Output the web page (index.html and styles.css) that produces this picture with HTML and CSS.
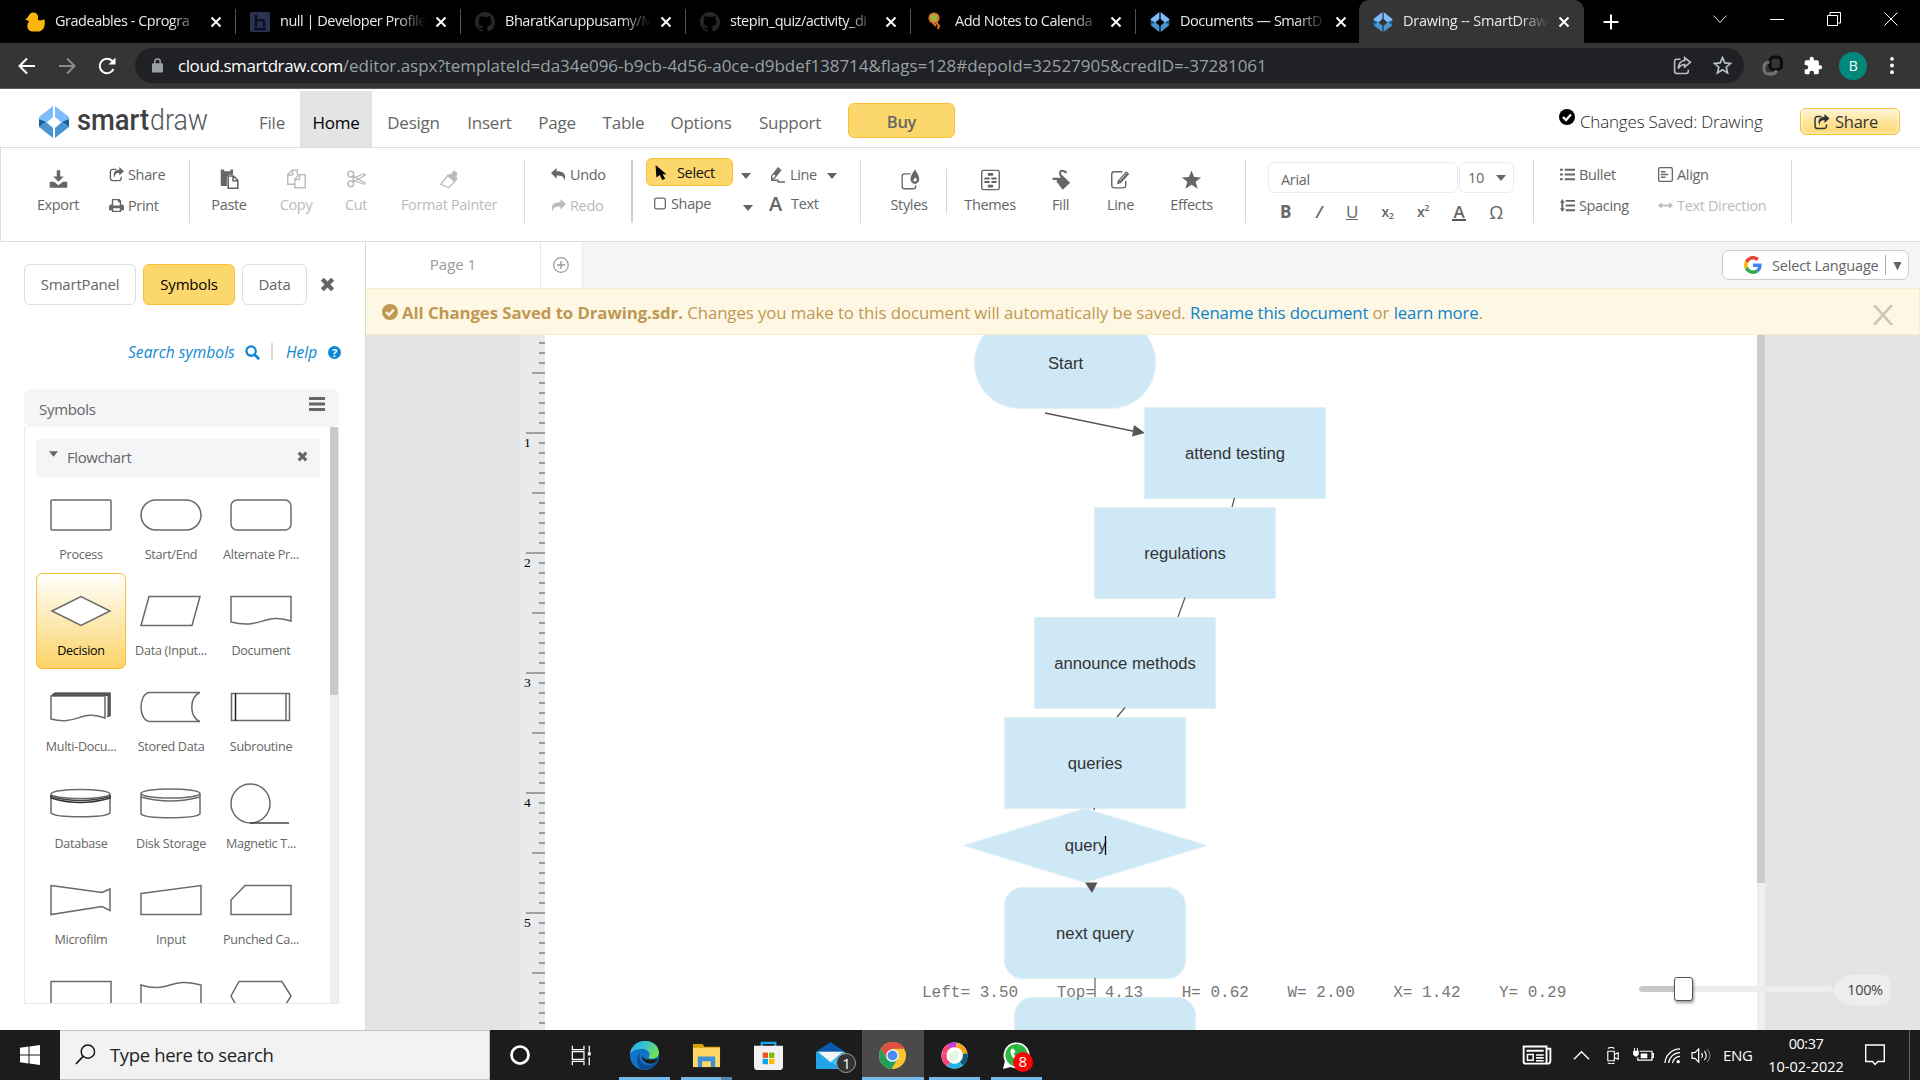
FILE: index.html
```
<!DOCTYPE html>
<html lang="en">
<head>
<meta charset="utf-8">
<title>Drawing -- SmartDraw</title>
<link rel="stylesheet" href="styles.css">
</head>
<body>
<svg class="defs" width="0" height="0">
  <symbol id="sd" viewBox="0 0 30 32">
    <path d="M14 0 0 11v2l7 4 7-6z" fill="#7cbcff"/><path d="M16 0 30 11v2l-7 4-7-6z" fill="#7cbcff"/>
    <path d="M0 13v8l7-5zM30 13v8l-7-5z" fill="#1d5f93"/>
    <path d="M14 32 0 21l7-5 7 6zM16 32l14-11-7-5-7 6z" fill="#4a95cf"/>
  </symbol>
  <symbol id="close" viewBox="0 0 12 12"><path d="M1.500 1.500l9 9M10.500 1.500l-9 9" stroke="currentColor" stroke-width="2" fill="none"/></symbol>
  <symbol id="times" viewBox="0 0 14 14"><path d="M2.200 2.200l9.600 9.600M11.800 2.200l-9.600 9.600" stroke="currentColor" stroke-width="4" fill="none"/></symbol>
  <symbol id="github" viewBox="0 0 16 16"><path fill="currentColor" d="M8 0C3.580 0 0 3.580 0 8c0 3.540 2.290 6.530 5.470 7.590.4.070.55-.17.55-.38 0-.19-.01-.82-.01-1.490-2.010.37-2.530-.49-2.690-.94-.09-.23-.48-.94-.82-1.130-.28-.15-.68-.52-.01-.53.63-.01 1.080.58 1.230.82.72 1.210 1.870.87 2.330.66.07-.52.28-.87.51-1.070-1.780-.2-3.640-.89-3.640-3.950 0-.87.31-1.590.82-2.150-.08-.2-.36-1.020.08-2.120 0 0 .67-.21 2.200.82.64-.18 1.320-.27 2-.27s1.360.09 2 .27c1.530-1.040 2.200-.82 2.200-.82.44 1.100.16 1.920.08 2.120.51.56.82 1.270.82 2.150 0 3.070-1.870 3.750-3.650 3.950.29.25.54.73.54 1.480 0 1.070-.01 1.930-.01 2.200 0 .21.15.46.55.38A8.010 8.010 0 0 0 16 8c0-4.420-3.580-8-8-8z"/></symbol>
  <symbol id="share" viewBox="0 0 16 16"><path d="M8 2.500H4a2.500 2.500 0 0 0-2.500 2.500v7A2.500 2.500 0 0 0 4 14.500h6.500A2.500 2.500 0 0 0 13 12v-1.500" fill="none" stroke="currentColor" stroke-width="1.500"/><path d="M11 0l5 4.500-5 4.500V6.300C7.500 6.200 6 7.500 6.300 11.500 3.500 7.500 5.500 2.800 11 2.800z" fill="currentColor"/></symbol>
  <symbol id="caret" viewBox="0 0 10 6"><path d="M0 0h10L5 6z" fill="currentColor"/></symbol>
  <symbol id="check" viewBox="0 0 16 16"><circle cx="8" cy="8" r="8" fill="currentColor"/><path d="M4 8l3 3 5-5.500" fill="none" stroke="var(--tick,#fff)" stroke-width="2.300"/></symbol>
</svg>

<div class="tabstrip">
  <div class="tab"><svg class="fav" viewBox="0 0 20 20"><path fill="#fbb50b" d="M2 6l3-4c2-2.500 7-2 8 2 .5 2-.5 3 0 4 3 1 5-1 6.500-.5.800 4 .5 11-5.500 12H7c-5-1-6-6-3-10L2 8H0z"/></svg><span>Gradeables - Cprogra</span><svg class="x"><use href="#close"/></svg></div>
  <div class="tab"><svg class="fav" viewBox="0 0 20 20"><rect width="20" height="20" rx="1.500" fill="#2b3355"/><path d="M6 3v12M6 9q8-3 8 2v4M4 17h12" stroke="#0b0f20" stroke-width="2.500" fill="none"/></svg><span>null | Developer Profile</span><svg class="x"><use href="#close"/></svg></div>
  <div class="tab"><svg class="fav gh"><use href="#github"/></svg><span>BharatKaruppusamy/M</span><svg class="x"><use href="#close"/></svg></div>
  <div class="tab"><svg class="fav gh"><use href="#github"/></svg><span>stepin_quiz/activity_di</span><svg class="x"><use href="#close"/></svg></div>
  <div class="tab"><svg class="fav" viewBox="0 0 20 20"><circle cx="9" cy="6" r="4.500" fill="#93b83e" stroke="#e0762b" stroke-width="2.200"/><path d="M11 10l3 4-1 3M8 11l3 3" stroke="#e0762b" stroke-width="2" fill="none"/></svg><span>Add Notes to Calenda</span><svg class="x"><use href="#close"/></svg></div>
  <div class="tab last"><svg class="fav"><use href="#sd"/></svg><span>Documents — SmartD</span><svg class="x"><use href="#close"/></svg></div>
  <div class="tab active"><svg class="fav"><use href="#sd"/></svg><span class="wide">Drawing -- SmartDraw</span><svg class="x"><use href="#close"/></svg></div>
  <svg class="newtab" viewBox="0 0 16 16"><path d="M8 .5v15M.5 8h15" stroke="#fff" stroke-width="2"/></svg>
  <div class="winctl">
    <svg viewBox="0 0 14 14"><path d="M.5 3.500L7 10.500l6.500-7" fill="none" stroke="#ddd"/></svg>
    <svg viewBox="0 0 14 14"><path d="M0 7.500h14" stroke="#fff"/></svg>
    <svg viewBox="0 0 14 14"><path d="M.5 3.500h10v10H.5zM3 3V.5h10.500V11H11" fill="none" stroke="#fff"/></svg>
    <svg viewBox="0 0 14 14"><path d="M.5.500l13 13M13.500.500l-13 13" stroke="#fff"/></svg>
  </div>
</div>

<div class="toolbar">
  <div class="nav">
    <svg viewBox="0 0 18 18"><path d="M17 9H2M9 1.500L1.500 9 9 16.500" fill="none" stroke="#fff" stroke-width="2"/></svg>
    <svg viewBox="0 0 18 18"><path d="M1 9h15M9 1.500L16.500 9 9 16.500" fill="none" stroke="#8a8a8a" stroke-width="2"/></svg>
    <svg viewBox="0 0 18 18"><path d="M15.500 12A7.200 7.200 0 1 1 14 3.800l1.500 1.500" fill="none" stroke="#fff" stroke-width="2"/><path d="M17.500.5v7h-7z" fill="#fff"/></svg>
  </div>
  <div class="urlbar">
    <svg class="lock" viewBox="0 0 12 16"><rect y="5.500" width="12" height="10" rx="1" fill="#9aa0a6"/><path d="M3 6V4a3 3 0 0 1 6 0v2" fill="none" stroke="#9aa0a6" stroke-width="1.600"/></svg>
    <span class="url"><b>cloud.smartdraw.com</b>/editor.aspx?templateId=da34e096-b9cb-4d56-a0ce-d9bdef138714&amp;flags=128#depoId=32527905&amp;credID=-37281061</span>
    <svg class="ushare" viewBox="0 0 18 18"><path d="M7 3H3.500A2 2 0 0 0 1.500 5v9.500a2 2 0 0 0 2 2h9a2 2 0 0 0 2-2V13M11 1.500L16.500 6 11 10.500V8q-4 0-6 4 .5-7.500 6-7.800z" fill="none" stroke="#bdc1c6" stroke-width="1.500"/></svg>
    <svg class="ustar" viewBox="0 0 18 18"><path d="M9 1.500l2.200 5 5.500.5-4.200 3.600 1.300 5.400L9 13.100 4.200 16l1.300-5.400L1.300 7l5.500-.5z" fill="none" stroke="#bdc1c6" stroke-width="1.600"/></svg>
  </div>
  <svg class="ext1" viewBox="0 0 20 20"><rect x="7.500" y="2" width="11" height="12" rx="4" fill="none" stroke="#0c0c0c" stroke-width="3"/><path d="M7 7H6a4 4 0 0 0-4 4v3a4 4 0 0 0 4 4h4a4 4 0 0 0 3.500-3.500" fill="none" stroke="#707074" stroke-width="3"/></svg>
  <svg class="ext2" viewBox="0 0 24 24"><path fill="#fff" d="M20.500 11H19V7a2 2 0 0 0-2-2h-4V3.500a2.500 2.500 0 0 0-5 0V5H4a2 2 0 0 0-2 2v3.800h1.500a2.700 2.700 0 0 1 0 5.400H2V20a2 2 0 0 0 2 2h3.800v-1.500a2.700 2.700 0 0 1 5.400 0V22H17a2 2 0 0 0 2-2v-4h1.500a2.500 2.500 0 0 0 0-5z"/></svg>
  <div class="avatar">B</div>
  <svg class="dots" viewBox="0 0 4 20"><circle cx="2" cy="3" r="2" fill="#fff"/><circle cx="2" cy="10" r="2" fill="#fff"/><circle cx="2" cy="17" r="2" fill="#fff"/></svg>
</div>

<div class="header">
  <svg class="logo" viewBox="0 0 175 44">
    <svg x="0" y="5" width="30" height="32"><use href="#sd"/></svg>
    <text x="38" y="29" class="lg-b" textLength="72" lengthAdjust="spacingAndGlyphs">smart</text>
    <text x="111" y="29" class="lg-l" textLength="58" lengthAdjust="spacingAndGlyphs">draw</text>
  </svg>
  <div class="menu"><span>File</span><span class="on">Home</span><span>Design</span><span>Insert</span><span>Page</span><span>Table</span><span>Options</span><span>Support</span></div>
  <div class="buy">Buy</div>
  <div class="saved"><svg><use href="#check"/></svg><span>Changes Saved: Drawing</span></div>
  <div class="sharebtn"><svg><use href="#share"/></svg>Share</div>
</div>

<div class="ribbon">
  <div class="grp g-file">
    <div class="tool"><svg viewBox="0 0 24 24"><path fill="currentColor" d="M10 2h4v7h4l-6 6-6-6h4zM2 15h5l5 4 5-4h5v7H2z"/></svg><span>Export</span></div>
    <div class="stack"><div><svg><use href="#share"/></svg>Share</div>
      <div><svg viewBox="0 0 16 16"><path fill="currentColor" fill-rule="evenodd" d="M3 1h8l2 2v4h1.500L16 8.500V13h-3v2H3v-2H0V8.500L1.500 7H3zm1.500 1.500V8h7V4.500h-2v-2zm0 8.500v2.500h7V11z"/></svg>Print</div></div>
  </div>
  <div class="grp g-clip">
    <div class="tool"><svg viewBox="0 0 24 24"><path fill="currentColor" d="M2 1h4v2h7V1h3v6h-4.500L9 9v11H2z"/><path d="M10.500 8.500h6l5 5v9h-11zM16 8.500V14h5.500" fill="#fff" stroke="currentColor" stroke-width="1.800"/></svg><span>Paste</span></div>
    <div class="tool off"><svg viewBox="0 0 24 24"><path d="M10 18H2V7l5-5h6v5M7.500 2v5.500H2M10 12l5-5h7v15H10zM15.500 7v5.500H10" fill="none" stroke="currentColor" stroke-width="1.600"/></svg><span>Copy</span></div>
    <div class="tool off"><svg viewBox="0 0 24 24"><circle cx="5.500" cy="6.500" r="3.300" fill="none" stroke="currentColor" stroke-width="1.800"/><circle cx="5.500" cy="17.500" r="3.300" fill="none" stroke="currentColor" stroke-width="1.800"/><path d="M8 8.500l14 8-1.500 1.500L8 13zM8 15.500l14-8L20.500 6 8 11z" fill="none" stroke="currentColor" stroke-width="1.400"/></svg><span>Cut</span></div>
    <div class="tool off"><svg viewBox="0 0 24 24"><path d="M2 18l8-10 8 7-7 7z" fill="none" stroke="currentColor" stroke-width="1.500"/><path d="M9 7l5-1 3-4 4 3-1 4 1 4-4 2z" fill="currentColor"/></svg><span>Format Painter</span></div>
  </div>
  <div class="grp g-undo"><div class="stack"><div><svg viewBox="0 0 16 16"><path fill="currentColor" d="M6 1v3.500c7 0 11 3 8 10.500.3-4.500-2-6-8-6v3.500L0 6.500z"/></svg>Undo</div><div class="off"><svg viewBox="0 0 16 16"><path fill="currentColor" d="M10 1v3.500c-7 0-11 3-8 10.500-.3-4.500 2-6 8-6v3.500l6-6z"/></svg>Redo</div></div></div>
  <div class="grp g-draw">
    <div class="select"><svg viewBox="0 0 13 18"><path d="M0 0l13 11H8.500l3 5.500-3.500 1.500-3-6-4 3z" fill="#000"/></svg>Select</div>
    <svg class="caret"><use href="#caret"/></svg>
    <div class="it"><svg viewBox="0 0 16 18"><path d="M1 10l7-9 3 2.500-7 9-3.500 1zM0 15h8v2h8" fill="none" stroke="currentColor" stroke-width="1.500"/><path d="M3 8l5-6 2.500 2-5 6z" fill="currentColor"/></svg>Line</div>
    <svg class="caret"><use href="#caret"/></svg>
    <div class="it shape"><svg viewBox="0 0 13 13"><rect x=".7" y=".7" width="11.600" height="11.600" rx="2" fill="none" stroke="currentColor" stroke-width="1.400"/></svg>Shape</div>
    <svg class="caret c2"><use href="#caret"/></svg>
    <div class="it txt"><b>A</b>Text</div>
  </div>
  <div class="grp g-style">
    <div class="tool first"><svg viewBox="0 0 24 24"><path d="M12 5H5.500A3 3 0 0 0 2.500 8v11a3 3 0 0 0 3 3H15a3 3 0 0 0 3-3v-1" fill="none" stroke="currentColor" stroke-width="1.500"/><path fill="currentColor" fill-rule="evenodd" d="M17 0q5 7 5 11a5 5.500 0 0 1-10 0q0-4 5-11zm0 9q-2 2.500-1.500 4t3 0T17 9z"/></svg><span>Styles</span></div>
    <div class="tool"><svg viewBox="0 0 24 24"><rect x="2" y="1" width="20" height="22" rx="2" fill="none" stroke="currentColor" stroke-width="1.600"/><path fill="currentColor" d="M9 4h6v3H9zM5 9h6v2.500H5zM13 9h6v2.500h-6zM5 13h6v2.500H5zM13 13h6v2.500h-6zM9 17.500h6v3H9z"/></svg><span>Themes</span></div>
    <div class="tool"><svg viewBox="0 0 24 24"><path fill="currentColor" d="M3 9.500h9l2-3 9 8.500-8.500 8-7-9L8 12H3z"/><path d="M19 3.500q-7-4.500-7.500.5 0 3 3 6" fill="none" stroke="currentColor" stroke-width="2.400"/></svg><span>Fill</span></div>
    <div class="tool"><svg viewBox="0 0 24 24"><path d="M18 13v5a3 3 0 0 1-3 3H5a3 3 0 0 1-3-3V5.500a3 3 0 0 1 3-3h9" fill="none" stroke="currentColor" stroke-width="1.600"/><path d="M8 17l1-4.500L18.500 2 22 5 12.500 15.500z" fill="currentColor"/><path d="M11 13l8-9" stroke="#fff" stroke-width=".8"/></svg><span>Line</span></div>
    <div class="tool"><svg viewBox="0 0 24 24"><path fill="currentColor" d="M12 1l3 7.500 8 .5-6.200 5 2.200 8-7-4.500L5 22l2.200-8L1 9l8-.5z"/></svg><span>Effects</span></div>
  </div>
  <div class="grp g-font">
    <div class="fonts"><div class="fname">Arial</div><div class="fsize">10<svg class="caret"><use href="#caret"/></svg></div></div>
    <div class="fmt"><b>B</b><span class="sl">/</span><u>U</u><span class="sb">x<sub>2</sub></span><span class="sb">x<sup>2</sup></span><span class="ua">A</span><span class="om">Ω</span></div>
  </div>
  <div class="grp g-para">
    <div class="stack"><div><svg viewBox="0 0 16 16"><path d="M0 3h3M0 8h3M0 13h3M5 3h11M5 8h11M5 13h11" stroke="currentColor" stroke-width="2.200"/></svg>Bullet</div><div><svg viewBox="0 0 16 16"><path d="M6 3h10M6 8h10M6 13h10M2.500 3v10" stroke="currentColor" stroke-width="2"/><path d="M0 5l2.500-4L5 5zM0 11l2.500 4L5 11z" fill="currentColor"/></svg>Spacing</div></div>
    <div class="stack"><div><svg viewBox="0 0 16 16"><rect x=".7" y=".7" width="14.600" height="14.600" rx="1.500" fill="none" stroke="currentColor" stroke-width="1.400"/><path d="M3 5h5M3 8h8M3 11h5" stroke="currentColor" stroke-width="1.600"/></svg>Align</div><div class="off"><svg viewBox="0 0 16 16"><path d="M2 8h12" stroke="currentColor" stroke-width="2"/><path d="M4 4.500v7L0 8zM12 4.500v7L16 8z" fill="currentColor"/></svg>Text Direction</div></div>
  </div>
</div>

<div class="main">
  <aside class="panel">
    <div class="ptabs"><div class="pb b1">SmartPanel</div><div class="pb b2">Symbols</div><div class="pb b3">Data</div><svg><use href="#times"/></svg></div>
    <div class="plinks"><i class="ss">Search symbols</i><svg viewBox="0 0 16 16"><circle cx="6.500" cy="6.500" r="5" fill="none" stroke="currentColor" stroke-width="2.400"/><path d="M10 10l5 5" stroke="currentColor" stroke-width="3"/></svg><span class="bar"></span><i class="hp">Help</i><span class="q">?</span></div>
    <div class="shead"><span>Symbols</span><svg viewBox="0 0 16 14"><path d="M0 1.500h16M0 7h16M0 12.500h16" stroke="currentColor" stroke-width="2.800"/></svg></div>
    <div class="sbody">
      <div class="slist">
        <div class="fc"><svg class="tri"><use href="#caret"/></svg><span>Flowchart</span><svg class="fx"><use href="#times"/></svg></div>
        <div class="grid">
          <div class="sym"><svg viewBox="0 0 62 48"><rect x="1" y="9" width="60" height="30" rx="1"/></svg>Process</div>
          <div class="sym"><svg viewBox="0 0 62 48"><rect x="1" y="9" width="60" height="30" rx="15"/></svg>Start/End</div>
          <div class="sym"><svg viewBox="0 0 62 48"><rect x="1" y="9" width="60" height="30" rx="6"/></svg>Alternate Pr...</div>
          <div class="sym sel"><svg viewBox="0 0 62 48"><path d="M2 24L31 9.500 60 24 31 38.500z"/></svg>Decision</div>
          <div class="sym"><svg viewBox="0 0 62 48"><path d="M9 9.500h51L52 38.500H1z"/></svg>Data (Input...</div>
          <div class="sym"><svg viewBox="0 0 62 48"><path d="M1 9.500h60V34c-26-9-30 9-60 1z"/></svg>Document</div>
          <div class="sym"><svg viewBox="0 0 62 48"><path d="M1 13h54v22c-24-9-28 8-54 1zM1 13l4-3h55v22l-3 2"/><path d="M3 11.500h56v22" fill="none" stroke-width="3" stroke="#555"/></svg>Multi-Docu...</div>
          <div class="sym"><svg viewBox="0 0 62 48"><path d="M60 9.500H10c-12 0-12 29 0 29h50c-11-4-11-25 0-29z"/></svg>Stored Data</div>
          <div class="sym"><svg viewBox="0 0 62 48"><path d="M1.500 10.500h58v27h-58zM56 10v28"/><path d="M5.500 10v28" stroke="#222"/></svg>Subroutine</div>
          <div class="sym"><svg viewBox="0 0 62 48"><path d="M1 15v18c5 5 54 5 59 0V15"/><path d="M1 15v3q29 9 59 0v-3" stroke="#333"/><path d="M1 16.500q29 8 59 0" stroke="#444"/><ellipse cx="30.500" cy="14" rx="29.500" ry="4.500"/></svg>Database</div>
          <div class="sym"><svg viewBox="0 0 62 48"><path d="M1 14v20c5 5 53 5 59 0V14"/><path d="M1 17q29 8 59 0"/><ellipse cx="30.500" cy="13.500" rx="29.500" ry="4.500"/></svg>Disk Storage</div>
          <div class="sym"><svg viewBox="0 0 62 48"><circle cx="20.500" cy="23.500" r="19.500"/><path d="M20 43h39" stroke="#444"/></svg>Magnetic T...</div>
          <div class="sym"><svg viewBox="0 0 62 48"><path d="M1 9.500l51 7 8-3.500v21.500l-8-4L1 38.500z"/></svg>Microfilm</div>
          <div class="sym"><svg viewBox="0 0 62 48"><path d="M1 17.500l60-8v29H1z"/></svg>Input</div>
          <div class="sym"><svg viewBox="0 0 62 48"><path d="M15 9.500h46v29H1V24z"/></svg>Punched Ca...</div>
          <div class="sym"><svg viewBox="0 0 62 48"><path d="M1 9.500h60v29H1z"/></svg></div>
          <div class="sym"><svg viewBox="0 0 62 48"><path d="M1 13c28 9 30-9 60 0v25H1z"/></svg></div>
          <div class="sym"><svg viewBox="0 0 62 48"><path d="M9 9.500h43L61 24l-9 14.500H9L1 24z"/></svg></div>
        </div>
      </div>
      <div class="sscroll"></div>
    </div>
  </aside>

  <section class="work">
    <div class="pages"><div class="p1">Page 1</div><div class="plus"><svg viewBox="0 0 16 16"><circle cx="8" cy="8" r="7.300" fill="none" stroke="currentColor" stroke-width="1.200"/><path d="M8 4v8M4 8h8" stroke="currentColor" stroke-width="1.400"/></svg></div>
      <div class="lang"><svg viewBox="0 0 48 48"><path fill="#EA4335" d="M24 9.500c3.500 0 6.700 1.200 9.200 3.600l6.900-6.900C35.900 2.400 30.500 0 24 0 14.600 0 6.500 5.400 2.600 13.200l8 6.200C12.400 13.700 17.700 9.500 24 9.500z"/><path fill="#4285F4" d="M47 24.600c0-1.600-.2-3.100-.4-4.600H24v9h12.900c-.6 3-2.300 5.500-4.800 7.200l7.700 6C44.400 38 47 31.800 47 24.600z"/><path fill="#FBBC05" d="M10.500 28.600a14.500 14.500 0 0 1 0-9.200l-8-6.200a24 24 0 0 0 0 21.600z"/><path fill="#34A853" d="M24 48c6.500 0 11.900-2.100 15.900-5.800l-7.700-6c-2.200 1.500-4.900 2.300-8.200 2.300-6.300 0-11.600-4.200-13.500-9.900l-8 6.200C6.500 42.600 14.600 48 24 48z"/></svg><span>Select Language</span><em></em><svg class="dn" viewBox="0 0 9 10"><path d="M0 0h9L4.500 9.500z" fill="currentColor"/></svg></div>
    </div>
    <div class="alert"><svg class="ck"><use href="#check"/></svg><p><b>All Changes Saved to Drawing.sdr.</b> Changes you make to this document will automatically be saved. <a>Rename this document</a> or <a>learn more</a>.</p><svg class="ax" viewBox="0 0 20 20"><path d="M1 0l18 20M19 0L1 20" stroke="#c9c5b2" stroke-width="2.600"/></svg></div>
    <div class="canvas">
      <div class="ruler"><span>1</span><span>2</span><span>3</span><span>4</span><span>5</span></div>
      <div class="paper"><svg class="flow" viewBox="545 335 1212 695" width="1212" height="695">
        <path d="M1045 413l90 18.500" stroke="#555" stroke-width="1.300"/>
        <path d="M1134 425l11 8-13 3.500z" fill="#555"/>
        <g fill="#cfe8f6" stroke="#e0f0f9">
          <rect x="974.500" y="317.500" width="181" height="91" rx="45"/>
          <rect x="1144.500" y="407.500" width="181" height="91"/>
          <rect x="1094.500" y="507.500" width="181" height="91"/>
          <rect x="1034.500" y="617.500" width="181" height="91"/>
          <rect x="1004.500" y="717.500" width="181" height="91"/>
          <path d="M963.500 845.500L1085 808.500l122 37-122 37z"/>
          <rect x="1004.500" y="887.500" width="181" height="91" rx="18"/>
          <rect x="1014.500" y="997.500" width="181" height="91" rx="18"/>
        </g>
        <path d="M1234.500 498l-2.500 9M1185 597.500l-7 19.500M1125 707.500l-8 9.500M1094.500 808l-.5 2" stroke="#555" stroke-width="1.200"/>
        <path d="M1085 882.500h12.500L1092 893z" fill="#555"/>
        <path d="M1095 978v19" stroke="#888" stroke-width="1.600"/>
        <g class="nt"><text x="1065.500" y="369">Start</text><text x="1235" y="459">attend testing</text><text x="1185" y="559">regulations</text><text x="1125" y="669">announce methods</text><text x="1095" y="769">queries</text><text x="1085.500" y="851">query</text><text x="1095" y="939">next query</text></g>
        <path d="M1105.500 836v19" stroke="#000" stroke-width="1.300"/>
      </svg></div>
      <div class="vscroll"></div>
      <div class="status">Left= 3.50    Top= 4.13    H= 0.62    W= 2.00    X= 1.42    Y= 0.29</div>
      <div class="zoom"><div class="track"><div class="thumb"></div></div><div class="pct">100%</div></div>
    </div>
  </section>
</div>

<div class="taskbar">
  <div class="start"><svg viewBox="0 0 20 20"><path fill="#fff" d="M0 2.800L8.500 1.600V9.500H0zM9.500 1.400L20 0v9.500H9.500zM0 10.500h8.500v7.900L0 17.200zM9.500 10.500H20V20L9.500 18.600z"/></svg></div>
  <div class="search"><svg viewBox="0 0 22 22"><circle cx="13.500" cy="8" r="7" fill="none" stroke="#111" stroke-width="1.500"/><path d="M8.500 13L1 21" stroke="#111" stroke-width="1.700"/></svg>Type here to search</div>
  <div class="apps">
    <div class="app"><svg viewBox="0 0 30 30"><circle cx="14.500" cy="14.500" r="8.800" fill="none" stroke="#fff" stroke-width="2.800"/></svg></div>
    <div class="app"><svg viewBox="0 0 30 30"><path d="M4.500 5v4h12V5M4.500 25v-4h12v4M4.500 11h12v8h-12zM22 5v6M22 17v8" fill="none" stroke="#fff" stroke-width="1.300"/><path d="M20.500 11.500h3v3.500h-3z" fill="#fff"/></svg></div>
    <div class="app run"><svg viewBox="0 0 30 30"><defs><linearGradient id="e1" x1="0" y1="0" x2="1" y2=".4"><stop offset="0" stop-color="#2fa8e0"/><stop offset=".5" stop-color="#35c1d8"/><stop offset="1" stop-color="#6fe05a"/></linearGradient></defs><circle cx="15" cy="15" r="15" fill="#1173c8"/><path d="M0 14C1-4 29-5 30 12c0 6-8 8-11 5 3-3 0-9-6-9-7 0-12 3-13 6z" fill="url(#e1)"/><path d="M11 12c-4 7 2 14 10 13 3 0 6-2 7-3-3 6-9 8-13 8C7 30 5 17 11 12z" fill="#0e4c92"/><path d="M13 14c-1 4 4 7 16 4l-2 4c-7 4-17-1-14-8z" fill="#1b1b1b"/></svg></div>
    <div class="app run multi"><svg viewBox="0 0 30 30"><path d="M1 3h10l2 3h16v5H1z" fill="#d99e09"/><path d="M1 7h28v20H1z" fill="#ffd766"/><path d="M6 27V16h18v11h-4.500v-6h-9v6z" fill="#3d91d5"/></svg></div>
    <div class="app"><svg viewBox="0 0 30 30"><path d="M8 6V2h14v4" fill="none" stroke="#1aa5e8" stroke-width="2.400"/><path d="M0 5h30v21a4 4 0 0 1-4 4H4a4 4 0 0 1-4-4z" fill="#f1f1f1"/><path d="M9 12h5.500v5.500H9z" fill="#f15022"/><path d="M15.500 12H21v5.500h-5.500z" fill="#7fba00"/><path d="M9 18.500h5.500V24H9z" fill="#00a3ee"/><path d="M15.500 18.500H21V24h-5.500z" fill="#ffb801"/></svg></div>
    <div class="app"><svg viewBox="0 0 30 30"><path d="M0 11L15 1l15 10z" fill="#0a5cab"/><path d="M0 11h30v18H0z" fill="#24a3e6"/><path d="M2 11h26L15 22z" fill="#f4f4f4"/><path d="M15 22L30 11v18z" fill="#36c5f4"/></svg><span class="bd one">1</span></div>
    <div class="app cur"><svg viewBox="0 0 30 30"><circle cx="15" cy="15" r="14" fill="#fbc62d"/><path d="M15 8h12.500A14 14 0 0 0 3 8l6 10z" fill="#dd5044"/><path d="M3 8a14 14 0 0 0 11 21l6-10-10 1z" fill="#1fa15d"/><circle cx="15" cy="15" r="6.500" fill="#fff"/><circle cx="15" cy="15" r="5.200" fill="#4b8bf5"/></svg></div>
    <div class="app run"><svg class="wx" viewBox="0 0 30 30"><circle cx="15" cy="15" r="13.500" fill="#fff"/><g fill="none" stroke-width="5"><path d="M4.500 13A11 11 0 0 1 9 5.500" stroke="#fe4273"/><path d="M9 5.500A11 11 0 0 1 17 4.200" stroke="#c43ad6"/><path d="M17 4.200A11 11 0 0 1 26 13" stroke="#f9a21b"/><path d="M26 13a11 11 0 0 1-4 10.500" stroke="#0b5a78"/><path d="M22 23.500A11 11 0 0 1 9 24" stroke="#1eb6e8"/><path d="M9 24a11 11 0 0 1-4.500-11" stroke="#fe4273"/></g><path d="M9 18q2-9 10-8 2 8-4 11-5 1-6-3z" fill="#e4f5e0"/></svg></div>
    <div class="app run"><svg viewBox="0 0 30 30"><path d="M1 29l2-8A13.500 13.500 0 1 1 9 27z" fill="#fff"/><circle cx="15" cy="14.500" r="11.500" fill="#2cb742"/><path d="M10 8c-3 3 0 9 4 12s8 2 8-1l-3-2-2 1.500q-4-2-5-5.500L14 11l-2-3z" fill="#fff"/></svg><span class="bd eight">8</span></div>
  </div>
  <div class="tray">
    <svg class="news" viewBox="0 0 30 22"><path d="M1 1.500h24v18H3a2 2 0 0 1-2-2zM25 4h4v13a2.500 2.500 0 0 1-4 2M4 6h18" fill="none" stroke="#fff" stroke-width="2"/><path d="M5 10h6v6H5zM14 10.500h8M14 13.500h8M14 16.500h8" fill="none" stroke="#fff" stroke-width="1.600"/></svg>
    <svg viewBox="0 0 18 18"><path d="M1 13l8-8 8 8" fill="none" stroke="#fff" stroke-width="1.500"/></svg>
    <svg viewBox="0 0 18 18"><path d="M4 4.500h7v10H4zM11 8l4-2v7l-4-2M4 1.500q4-2 7 0M4 17q4 1.500 7 0" fill="none" stroke="#fff" stroke-width="1.200"/></svg>
    <svg class="bat" viewBox="0 0 22 18"><path d="M7 4.500h13v9.500H5V11M20 7h1.500v4H20" fill="none" stroke="#fff" stroke-width="1.300"/><path d="M8 7h7v5H8zM0 4h6v4L4 10H2L0 8zM1 1h1v3H1zM4 1h1v3H4z" fill="#fff"/></svg>
    <svg viewBox="0 0 18 18"><g fill="none" stroke="#fff" stroke-width="1.300"><path d="M1 17A16 16 0 0 1 17 2M5 17A12 12 0 0 1 17 6M9 17a8 8 0 0 1 8-7"/></g><circle cx="15" cy="15.500" r="1.800" fill="#fff"/></svg>
    <svg class="spk" viewBox="0 0 22 18"><path d="M1 6h3l4-4v14l-4-4H1z" fill="none" stroke="#fff" stroke-width="1.300"/><path d="M11 6.500q2 2.500 0 5M14 4q4 5 0 10" fill="none" stroke="#fff" stroke-width="1.200"/><path d="M17 2q6 7 0 14" fill="none" stroke="#777" stroke-width="1.200"/></svg>
    <span class="eng">ENG</span>
    <div class="clock"><span>00:37</span><span class="date">10-02-2022</span></div>
    <svg class="note" viewBox="0 0 20 22"><path d="M.7 1h18.600v16.500H13L10 20.500 7.500 17.500H.7z" fill="none" stroke="#fff" stroke-width="1.400"/></svg>
  </div>
</div>
</body>
</html>
```
FILE: styles.css
```
* { box-sizing: border-box; }
body { margin: 0; width: 1920px; height: 1080px; overflow: hidden; display: flex; flex-direction: column; background: #fff; font-family: "Open Sans", "Noto Sans", sans-serif; font-size: 15px; letter-spacing: -0.3px; color: #666; }
svg { display: block; flex: none; }
.defs { position: absolute; }

/* browser tabs */
.tabstrip { height: 43px; flex: none; background: #000; display: flex; align-items: center; padding-left: 11px; }
.tab { width: 225px; height: 43px; display: flex; align-items: center; padding-left: 14px; position: relative; color: #e8eaed; }
.tab::after { content: ""; width: 1px; height: 25px; background: #555; position: absolute; right: 0; top: 9px; }
.tab.last::after, .tab.active::after { display: none; }
.tab.last { width: 223px; }
.tab.active { background: #353535; border-radius: 10px 10px 0 0; }
.fav { width: 20px; height: 20px; margin-right: 10px; }
.gh { color: #24292e; }
.tab span { width: 149px; overflow: hidden; white-space: nowrap; font-size: 14.500px; line-height: 24px; margin-top: -1px; letter-spacing: -0.480px; -webkit-mask-image: linear-gradient(90deg, #000 78%, transparent 98%); mask-image: linear-gradient(90deg, #000 78%, transparent 98%); }
.tab .wide { letter-spacing: -0.250px; }
.tab .x { width: 12px; height: 12px; margin-left: 6px; color: #fff; }
.newtab { width: 16px; height: 16px; margin-left: 19px; }
.winctl { display: flex; gap: 43px; margin-left: auto; padding-right: 22px; margin-top: -6px; }
.winctl svg { width: 14px; height: 14px; }

/* address row */
.toolbar { height: 46px; flex: none; background: #353535; border-bottom: 1px solid #5a5a5a; display: flex; align-items: center; position: relative; }
.nav { width: 135px; display: flex; gap: 22px; padding-left: 18px; }
.nav svg { width: 18px; height: 18px; }
.urlbar { width: 1609px; height: 35px; border-radius: 18px; background: #202124; display: flex; align-items: center; padding-left: 17px; }
.lock { width: 11px; height: 15px; margin-right: 15px; }
.url { font-size: 17px; letter-spacing: -0.035px; color: #9aa0a6; white-space: nowrap; width: 1495px; }
.url b { font-weight: 400; color: #fff; letter-spacing: -0.420px; }
.ushare, .ustar { width: 19px; height: 19px; }
.ustar { margin-left: 21px; }
.ext1 { width: 21px; height: 21px; margin-left: 18px; }
.ext2 { width: 20px; height: 20px; margin-left: 20px; }
.avatar { width: 28px; height: 28px; border-radius: 50%; background: #00897b; color: #fff; margin-left: 16px; text-align: center; line-height: 28px; font-size: 14px; }
.dots { width: 4px; height: 19px; margin-left: 23px; }

/* app header */
.header { height: 58px; flex: none; display: flex; align-items: center; background: #fff; }
.logo { width: 175px; height: 44px; margin-left: 39px; margin-top: 9px; }
.lg-b { font: 500 29px Roboto, sans-serif; fill: #3f4042; letter-spacing: 0; }
.lg-l { font: 300 29px Roboto, sans-serif; fill: #55565a; letter-spacing: 0; }
.menu { display: grid; grid-template-columns: 56px 72px 83px 69px 66px 67px 88px 90px; margin-left: 30px; align-self: stretch; padding-top: 2px; }
.menu span { text-align: center; font-size: 17px; line-height: 63px; height: 56px; letter-spacing: -0.250px; }
.menu .on { background: #e2e4e6; color: #000; }
.buy { width: 107px; height: 35px; background: #fcd76c; border: 1px solid #fdbf38; border-radius: 6px; text-align: center; line-height: 36px; font-weight: 600; font-size: 16.500px; margin-left: 13px; margin-top: 4px; }
.saved { display: flex; margin-left: 604px; margin-top: 11px; height: 30px; color: #000; }
.saved svg { width: 16px; height: 16px; }
.saved span { margin: -6px 0 0 5px; font-size: 17px; font-weight: 300; letter-spacing: -0.190px; line-height: 38px; width: 220px; white-space: nowrap; color: #222; }
.sharebtn { width: 100px; height: 27px; border: 1px solid #fdbf38; border-radius: 6px; background: linear-gradient(#fff3d0, #fcd76c); display: flex; align-items: center; padding-left: 12px; gap: 5px; color: #333; font-size: 16.500px; letter-spacing: -0.250px; margin-top: 7px; box-shadow: inset 0 0 4px #fff; }
.sharebtn svg { width: 17px; height: 16px; }

/* ribbon */
.ribbon { height: 95px; flex: none; border: 1px solid #dcdddf; border-right: 0; display: flex; font-size: 14.500px; letter-spacing: -0.350px; }
.grp { height: 63px; margin-top: 12px; border-right: 1px solid #d8d9db; display: grid; align-content: start; flex: none; }
.tool { padding-top: 7px; display: flex; flex-direction: column; align-items: center; height: 55px; white-space: nowrap; }
.tool svg { width: 21px; height: 24px; }
.tool span { line-height: 20px; margin-top: 4px; }
.off { color: #bbb; }
.stack { display: grid; grid-auto-rows: 31px; margin-top: -1px; }
.stack div { display: flex; align-items: center; white-space: nowrap; }
.stack svg { width: 15px; height: 15px; margin-right: 4px; }
.g-file { width: 189px; grid-template-columns: 60px 80px; gap: 21px; padding-left: 27px; }
.g-clip { width: 335px; grid-template-columns: 78px 56px 64px 122px; }
.g-undo { width: 108px; padding-left: 26px; border-right: 2px solid #cfd0d2; }
.g-draw { width: 228px; grid-template-columns: 88px 37px 61px 30px; grid-template-rows: 28px 34px; padding-left: 13px; }
.caret { width: 10px; height: 6px; }
.g-draw .caret { margin: 13px 0 0 7px; }
.g-draw .c2 { margin: 17px 0 0 15px; }
.g-draw .it + .caret { margin-left: -5px; }
.g-draw .shape + .caret { margin-left: 9px; }
.select { width: 87px; height: 28px; margin-top: -2px; border: 1px solid #fdbf38; border-radius: 6px; background: #fcd76c; color: #111; display: flex; align-items: center; padding-left: 8px; }
.select svg { width: 12px; height: 15px; margin-right: 10px; }
.it { display: flex; align-items: center; white-space: nowrap; height: 29px; }
.it svg { width: 14px; height: 16px; margin-right: 5px; }
.shape { padding-left: 8px; height: 30px; }
.shape svg { width: 12px; height: 13px; margin-right: 5px; }
.it b { font-size: 20px; width: 22px; font-weight: 600; }
.txt { margin-left: -2px; height: 31px; }
.g-style { width: 385px; grid-template-columns: 86px 86px 55px 65px 77px; }
.g-style .first { border-right: 1px solid #d8d9db; height: 45px; margin-top: 9px; padding-top: 0; padding-left: 11px; }
.g-style .first svg { margin-top: -2px; margin-left: 3px; }
.g-style .tool svg { position: relative; top: 1px; }
.g-font { width: 288px; padding-left: 22px; }
.fonts { display: flex; gap: 1px; margin-top: 2px; }
.fname, .fsize { height: 31px; border: 1px solid #eaebec; border-radius: 6px; line-height: 33px; }
.fname { width: 190px; padding-left: 12px; }
.fsize { width: 55px; display: flex; align-items: center; padding-left: 8px; gap: 12px; }
.fmt { display: grid; grid-template-columns: 35px 32px 34px 37px 34px 38px 36px; margin-top: 7px; text-align: center; font-size: 17px; line-height: 24px; height: 24px; }
.fmt .sl { font-style: italic; font-weight: 600; }
.fmt .sb { font-size: 14px; font-weight: 600; line-height: 23px; }
.fmt sub, .fmt sup { font-size: 9px; line-height: 0; }
.fmt sub { vertical-align: -2px; }
.fmt sup { vertical-align: 6px; }
.om { font-size: 18px; }
.ua { justify-self: center; width: 14px; height: 20px; line-height: 22px; margin-top: 1px; border-bottom: 2px solid #555; font-weight: 600; }
.g-para { width: 258px; grid-template-columns: 98px 130px; padding-left: 26px; }

/* side panel */
.main { display: flex; height: 788px; flex: none; }
.panel { width: 366px; border-right: 1px solid #d8d9db; }
.ptabs { display: flex; gap: 7px; padding: 22px 0 0 24px; align-items: center; }
.pb { height: 41px; border: 1px solid #dcdddf; border-radius: 6px; text-align: center; line-height: 38px; letter-spacing: -0.200px; }
.b1 { width: 112px; } .b2 { width: 92px; background: #fcd76c; border-color: #fdbf38; color: #000; } .b3 { width: 65px; }
.ptabs svg { width: 15px; height: 15px; margin-left: 6px; }
.plinks { display: flex; align-items: center; height: 24px; margin-top: 35px; padding-left: 128px; color: #0d87d3; font-size: 15.500px; }
.plinks .ss { width: 109px; white-space: nowrap; letter-spacing: 0.060px; }
.plinks .hp { width: 33px; letter-spacing: 0; }
.plinks svg { width: 15px; height: 15px; margin-left: 8px; }
.plinks .bar { width: 2px; height: 17px; background: #d5d6d8; margin: 0 13px 2px 11px; }
.plinks .q { width: 13px; height: 13px; border-radius: 50%; background: #0d87d3; color: #fff; font: bold 11px/13px "Open Sans"; text-align: center; margin-left: 9px; }
.shead { width: 315px; height: 38px; margin: 25px 0 0 24px; border-radius: 7px; background: #f4f5f7; display: flex; justify-content: space-between; align-items: center; padding: 2px 14px 0 15px; }
.shead svg { width: 16px; height: 14px; margin-top: -10px; }
.sbody { width: 315px; height: 577px; margin-left: 24px; border: 1px solid #e9eaeb; border-top: 0; display: flex; overflow: hidden; }
.slist { width: 305px; padding: 12px 0 0 11px; }
.fc { width: 284px; height: 38px; background: #f4f5f7; display: flex; align-items: center; padding-left: 13px; }
.fc span { width: 230px; margin-top: -2px; letter-spacing: -0.450px; }
.tri { width: 9px; height: 6px; margin: -8px 9px 0 0; }
.fx { width: 11px; height: 11px; margin-top: -3px; }
.grid { display: grid; grid-template-columns: 90px 90px 90px; grid-auto-rows: 96.200px; }
.sym { text-align: center; font-size: 12.600px; letter-spacing: -0.280px; padding-top: 14px; line-height: 20px; white-space: nowrap; border: 0 solid #fdbf38; }
.sym svg { width: 62px; height: 48px; margin: 0 auto 6px; fill: #fff; stroke: #6a6a6a; stroke-width: 1.500; }
.sel { border-width: 1px; border-radius: 6px; background: linear-gradient(#fff, #fcd366); color: #000; padding-top: 13px; }
.sscroll { width: 8px; background: linear-gradient(#c9c9c9, #c9c9c9) 0 0 / 8px 268px no-repeat #efefef; }

/* drawing area */
.work { width: 1554px; display: flex; flex-direction: column; }
.pages { height: 46px; display: flex; background: #f4f5f7; align-items: center; }
.p1 { width: 175px; height: 46px; background: #fff; border-right: 1px solid #e6e7e9; text-align: center; line-height: 45px; color: #999; letter-spacing: 0; }
.plus { width: 42px; height: 46px; background: #fff; border-right: 1px solid #eceded; display: flex; align-items: center; justify-content: center; color: #999; padding-right: 2px; }
.plus svg { width: 16px; height: 16px; }
.lang { margin-left: auto; margin-right: 11px; width: 187px; height: 30px; border: 1px solid #cdced1; border-radius: 7px; background: #fff; display: flex; align-items: center; padding-left: 21px; }
.lang svg { width: 18px; height: 18px; }
.lang span { width: 113px; margin-left: 10px; white-space: nowrap; font-size: 14.500px; letter-spacing: -0.170px; }
.lang em { width: 1px; height: 20px; background: #aaa; }
.lang .dn { width: 9px; height: 9px; margin: 2px 0 0 7px; }
.alert { height: 47px; background: #fdf7e3; border: 1px solid #fbeccb; border-left: 0; display: flex; align-items: center; padding-left: 16px; color: #c09853; font-size: 16.800px; letter-spacing: -0.070px; --tick: #fdf7e3; }
.alert p { margin: 2px 0 0; width: 1483px; white-space: nowrap; padding-left: 4px; }
.alert b { font-weight: 700; letter-spacing: -0.075px; }
.alert a { color: #0b83cd; letter-spacing: -0.160px; }
.ck { width: 16px; height: 16px; }
.ax { width: 20px; height: 20px; margin: 6px 0 0 -8px; }
.canvas { height: 695px; display: flex; background: #e2e4e6; position: relative; overflow: hidden; }
.ruler { width: 25px; margin-left: 154px; padding-top: 48px; background:
  repeating-linear-gradient(transparent 0 7px, #9b9b9b 7px 9px, transparent 9px 10px) right / 6.500px 100% no-repeat,
  repeating-linear-gradient(transparent 0 37px, #a0a0a0 37px 39px, transparent 39px 60px) right / 13px 100% no-repeat,
  repeating-linear-gradient(transparent 0 97px, #a0a0a0 97px 99px, transparent 99px 120px) right / 19px 100% no-repeat, #e9eaec; }
.ruler span { display: block; height: 120px; line-height: 120px; padding-left: 4px; font-family: "Liberation Serif", serif; font-size: 13.500px; color: #000; letter-spacing: 0; }
.paper { width: 1212px; background: #fff; }
.nt { font: 16.670px "Liberation Sans", Arial, sans-serif; letter-spacing: 0; fill: #333; text-anchor: middle; }
.vscroll { width: 8px; background: linear-gradient(#ccc, #ccc) 0 0 / 8px 548px no-repeat #efefef; }
.status { position: absolute; left: 556px; top: 647px; white-space: pre; font: 16px/22px "Liberation Mono", monospace; color: #777; letter-spacing: 0.015px; }
.zoom { position: absolute; left: 1273px; top: 640px; display: flex; align-items: center; height: 30px; }
.track { width: 193px; height: 6px; border-radius: 3px; margin-top: -2px; background: linear-gradient(90deg, #c8c8c8 36px, #ededed 36px); }
.thumb { width: 19px; height: 24px; margin: -9px 0 0 35px; background: #fff; border: 1px solid #555; border-radius: 3px; box-shadow: 1px 2px 3px rgba(0,0,0,.4); }
.pct { width: 58px; height: 30px; background: #eee; clip-path: polygon(0 50%, 10px 8%, 18px 0, 90% 0, 97% 6%, 100% 18%, 100% 82%, 97% 94%, 90% 100%, 18px 100%, 10px 92%); text-align: center; line-height: 30px; padding-left: 8px; font-size: 14.500px; letter-spacing: -0.400px; color: #444; }

/* taskbar */
.taskbar { height: 50px; flex: none; background: #1c1c1c; display: flex; color: #fff; }
.start { width: 60px; display: flex; align-items: center; padding-left: 20px; }
.start svg { width: 20px; height: 20px; }
.search { width: 430px; background: #f2f2f2; border: 1px solid #c2c2c2; border-left: 0; color: #222; display: flex; align-items: center; padding: 0 0 2px 15px; font-size: 18.500px; letter-spacing: -0.360px; gap: 14px; }
.search svg { width: 21px; height: 21px; }
.apps { display: flex; margin-left: -1px; }
.app { width: 62.100px; display: flex; align-items: center; justify-content: center; position: relative; }
.app svg { width: 29px; height: 29px; }
.app .wx { margin-right: 1px; }
.run { background: linear-gradient(#76b9ed, #76b9ed) center bottom / 51px 3px no-repeat; }
.multi { background: linear-gradient(90deg, #76b9ed 40px, #5487ae 40px) center bottom / 51px 3px no-repeat; }
.cur { background: linear-gradient(#76b9ed, #76b9ed) bottom / 100% 3px no-repeat #4a4a4a; }
.bd { position: absolute; width: 20px; height: 20px; border-radius: 50%; left: 37px; top: 23px; text-align: center; font-size: 15px; line-height: 19px; letter-spacing: 0; }
.one { background: #333; border: 1px solid #999; }
.eight { background: #f90606; left: 27px; top: 22px; }
.tray { display: flex; align-items: center; margin-left: auto; width: 398px; }
.tray svg { width: 17px; height: 17px; margin-right: 14px; }
.tray .news { width: 30px; height: 21px; margin-right: 21px; }
.tray .bat { width: 21px; margin-right: 10px; margin-left: -2px; }
.tray .spk { width: 21px; margin: 0 12px 0 -4px; }
.eng { font-size: 15px; letter-spacing: -0.350px; width: 28px; margin-left: -1px; }
.clock { width: 78px; margin-left: 16px; display: flex; flex-direction: column; align-items: center; font-size: 14.500px; letter-spacing: -0.500px; line-height: 23px; }
.date { letter-spacing: 0; }
.tray .note { width: 20px; height: 22px; margin: 0 24px 0 20px; }
.tray::after { content: ""; width: 1px; height: 50px; background: #666; }
```
